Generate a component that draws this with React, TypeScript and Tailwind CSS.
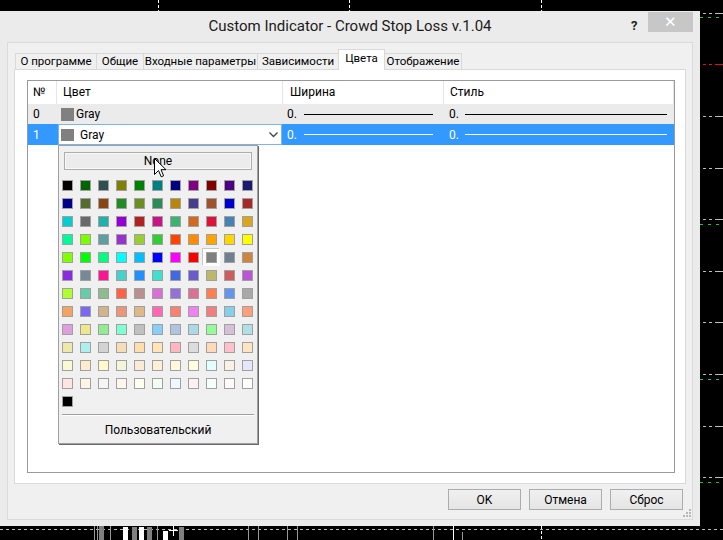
import React from "react";

// MetaTrader web-colour palette, 11 per row
const palette = [
  ["#000000", "#006400", "#2F4F4F", "#808000", "#008000", "#008080", "#000080", "#800080", "#800000", "#4B0082", "#191970"],
  ["#00008B", "#556B2F", "#8B4513", "#228B22", "#6B8E23", "#2E8B57", "#B8860B", "#483D8B", "#A0522D", "#0000CD", "#A52A2A"],
  ["#00CED1", "#696969", "#20B2AA", "#9400D3", "#B22222", "#C71585", "#3CB371", "#D2691E", "#DC143C", "#4682B4", "#DAA520"],
  ["#00FA9A", "#7CFC00", "#5F9EA0", "#9932CC", "#9ACD32", "#32CD32", "#FF4500", "#FF8C00", "#FFA500", "#FFD700", "#FFFF00"],
  ["#7FFF00", "#00FF00", "#00FF7F", "#00FFFF", "#00BFFF", "#0000FF", "#FF00FF", "#FF0000", "#808080", "#708090", "#CD853F"],
  ["#8A2BE2", "#778899", "#FF1493", "#48D1CC", "#1E90FF", "#40E0D0", "#4169E1", "#6A5ACD", "#BDB76B", "#CD5C5C", "#BA55D3"],
  ["#ADFF2F", "#66CDAA", "#8FBC8F", "#FF6347", "#BC8F8F", "#DA70D6", "#9370DB", "#DB7093", "#FF7F50", "#6495ED", "#A9A9A9"],
  ["#F4A460", "#7B68EE", "#D2B48C", "#E9967A", "#DEB887", "#FF69B4", "#FA8072", "#EE82EE", "#F08080", "#87CEEB", "#FFA07A"],
  ["#DDA0DD", "#F0E68C", "#90EE90", "#7FFFD4", "#C0C0C0", "#87CEFA", "#B0C4DE", "#ADD8E6", "#98FB98", "#D8BFD8", "#B0E0E6"],
  ["#EEE8AA", "#AFEEEE", "#D3D3D3", "#F5DEB3", "#FFDEAD", "#FFE4B5", "#FFB6C1", "#DCDCDC", "#FFDAB9", "#FFC0CB", "#FFE4C4"],
  ["#FAFAD2", "#FFEBCD", "#FFFACD", "#F5F5DC", "#FAEBD7", "#FFEFD5", "#FFF8DC", "#FFFFE0", "#E0FFFF", "#FAF0E6", "#E6E6FA"],
  ["#FFE4E1", "#FDF5E6", "#F5F5F5", "#FFF5EE", "#FFFFF0", "#F0FFF0", "#F0F8FF", "#FFF0F5", "#F5FFFA", "#FFFAFA", "#FFFFFF"],
  ["#000000"],
];

const tabs = [
  { label: "О программе", w: "w-[82px]" },
  { label: "Общие", w: "w-[48px]" },
  { label: "Входные параметры", w: "w-[115px]" },
  { label: "Зависимости", w: "w-[82px]" },
  { label: "Цвета", w: "w-[47px]", active: true },
  { label: "Отображение", w: "w-[78px]" },
];

function ChartBackdrop() {
  const grey = [13, 116, 168, 219, 271, 322, 374, 426, 477];
  const green = [17, 224, 379, 482];
  return (
    <svg className="absolute inset-0" width="723" height="540">
      {[158.5, 349.5, 541.5].map((x) => (
        <line key={x} x1={x} y1="0" x2={x} y2="11" stroke="#fff" strokeDasharray="3 2" />
      ))}
      {grey.map((y) => (
        <line key={y} x1="703" y1={y + 0.5} x2="723" y2={y + 0.5} stroke="#bdbdbd" strokeDasharray="3 3 3 3 12" />
      ))}
      {green.map((y) => (
        <line key={y} x1="700" y1={y + 0.5} x2="723" y2={y + 0.5} stroke="#22c322" strokeDasharray="3 5" />
      ))}
      <line x1="703" y1="64.5" x2="723" y2="64.5" stroke="#e01010" strokeDasharray="3 3 3 3 12" />
      <line x1="0" y1="529.5" x2="723" y2="529.5" stroke="#bdbdbd" strokeDasharray="3 3" />
      <line x1="94.5" y1="526" x2="94.5" y2="540" stroke="#9a9a9a" />
      <line x1="97.5" y1="526" x2="97.5" y2="540" stroke="#9a9a9a" />
      <rect x="99" y="526" width="5" height="14" fill="#808080" />
      <line x1="110.5" y1="526" x2="110.5" y2="540" stroke="#9a9a9a" />
      <rect x="123" y="527" width="5" height="13" fill="#fff" />
      <rect x="132" y="527" width="5" height="13" fill="#808080" />
      <rect x="139" y="527" width="5" height="13" fill="#fff" />
      <rect x="147" y="527" width="5" height="13" fill="#808080" />
      <line x1="157.5" y1="526" x2="157.5" y2="540" stroke="#9a9a9a" />
      <rect x="163" y="531" width="5" height="9" fill="#fff" />
      <line x1="173.5" y1="526" x2="173.5" y2="536" stroke="#fff" />
      <line x1="169" y1="530.5" x2="178" y2="530.5" stroke="#fff" />
      <rect x="179" y="527" width="5" height="13" fill="#808080" />
      <line x1="248.5" y1="526" x2="248.5" y2="540" stroke="#9a9a9a" />
      <line x1="258.5" y1="526" x2="258.5" y2="540" stroke="#9a9a9a" />
      <line x1="287.5" y1="526" x2="287.5" y2="540" stroke="#9a9a9a" />
      <line x1="297.5" y1="526" x2="297.5" y2="540" stroke="#9a9a9a" />
      <line x1="433.5" y1="526" x2="433.5" y2="540" stroke="#9a9a9a" />
      <line x1="453.5" y1="526" x2="453.5" y2="540" stroke="#fff" />
      <line x1="462.5" y1="532" x2="462.5" y2="540" stroke="#9a9a9a" />
      <line x1="541.5" y1="526" x2="541.5" y2="540" stroke="#fff" strokeDasharray="3 2" />
    </svg>
  );
}

function Cursor() {
  return (
    <svg className="absolute left-[95px] top-[12px]" width="13" height="20" viewBox="0 0 13 20">
      <path d="M0.5 0.5 L0.5 16.5 L4.5 12.5 L7.2 18.8 L9.6 17.8 L7 11.7 L12 11.7 Z" fill="#fff" stroke="#000" strokeLinejoin="miter" />
    </svg>
  );
}

function ColorDropdown() {
  return (
    <div className="absolute left-0 top-[21px] flex h-[299px] w-[200px] flex-col border border-[#a0a0a0] bg-[#f0f0f0] shadow-[1px_1px_0_#6a6a6a]">
      <div className="relative mx-[5px] mt-[6px] flex h-[18px] items-center justify-center border border-[#adadad] bg-[#ececec] text-[12px] text-black shadow-[inset_0_0_0_1px_#f8f8f8]">
        None
      </div>
      <div className="ml-[3px] mt-[10px] grid grid-cols-[repeat(11,11px)] gap-[7px]">
        {palette.flat().map((c, i) => (
          <div
            key={i}
            className={
              i === 52
                ? "h-[11px] w-[11px] border border-[#a0a0a0] shadow-[0_0_0_3px_#ffffff,-1px_-1px_0_3px_#c8c8c8]"
                : "h-[11px] w-[11px] border border-[#a0a0a0]"
            }
            style={{ backgroundColor: c }}
          />
        ))}
      </div>
      <div className="mx-[3px] mt-[7px] border-b border-t border-b-white border-t-[#a0a0a0]" />
      <div className="flex flex-1 items-center justify-center text-[12px] text-black">Пользовательский</div>
      <Cursor />
    </div>
  );
}

function StyleLine({ white }: { white?: boolean }) {
  return <div className={white ? "h-px flex-1 bg-white" : "h-px flex-1 bg-black"} />;
}

function ColorsList() {
  return (
    <div className="flex-1 border border-[#9a9a9a] bg-white text-[12px] text-black">
      <div className="grid h-[23px] grid-cols-[29px_226px_161px_1fr] items-center">
        <div className="h-full border-r border-[#e5e5e5] pl-[5px] leading-[23px]">№</div>
        <div className="h-full border-r border-[#e5e5e5] pl-[6px] leading-[23px]">Цвет</div>
        <div className="h-full border-r border-[#e5e5e5] pl-[7px] leading-[23px]">Ширина</div>
        <div className="h-full border-r border-[#e5e5e5] pl-[6px] leading-[23px]">Стиль</div>
      </div>
      <div className="grid h-[20px] grid-cols-[29px_226px_161px_1fr] items-center bg-[#ebebeb]">
        <div className="pl-[5px]">0</div>
        <div className="flex items-center pl-[4px]">
          <div className="h-[13px] w-[13px] bg-[#808080]" />
          <span className="ml-[2px]">Gray</span>
        </div>
        <div className="flex items-center pl-[4px] pr-[11px]">
          <span className="mr-[7px]">0.</span>
          <StyleLine />
        </div>
        <div className="flex items-center pl-[5px] pr-[7px]">
          <span className="mr-[6px]">0.</span>
          <StyleLine />
        </div>
      </div>
      <div className="relative z-10 grid h-[21px] grid-cols-[29px_226px_161px_1fr] items-center bg-[#3399ff] text-white">
        <div className="pl-[5px]">1</div>
        <div className="relative h-full pl-px">
          <div className="flex h-[21px] w-[224px] items-center border border-[#7eb4ea] bg-white pl-[2px] text-black">
            <div className="h-[12px] w-[13px] bg-[#808080]" />
            <span className="ml-[6px] flex-1">Gray</span>
            <svg width="9" height="6" viewBox="0 0 9 6" className="mr-[3px]">
              <path d="M0.5 0.5 L4.5 4.5 L8.5 0.5" fill="none" stroke="#444" strokeWidth="1.3" />
            </svg>
          </div>
          <div className="absolute left-px top-0">
            <ColorDropdown />
          </div>
        </div>
        <div className="flex items-center pl-[4px] pr-[11px]">
          <span className="mr-[7px]">0.</span>
          <StyleLine white />
        </div>
        <div className="flex items-center pl-[5px] pr-[7px]">
          <span className="mr-[6px]">0.</span>
          <StyleLine white />
        </div>
      </div>
    </div>
  );
}

export default function App() {
  return (
    <div className="relative h-[540px] w-[723px] overflow-hidden bg-black font-['Roboto',sans-serif]">
      <ChartBackdrop />
      <div className="absolute left-0 top-[11px] flex h-[515px] w-[700px] flex-col bg-[#ebebeb]">
        <div className="relative flex h-[31px] shrink-0 items-center justify-center">
          <span className="text-[15px] text-[#1a1a1a]">Custom Indicator - Crowd Stop Loss v.1.04</span>
          <span className="absolute left-[631px] top-[5px] text-[13px] font-bold text-[#222]">?</span>
          <div className="absolute left-[648px] top-px flex h-[20px] w-[45px] items-center justify-center bg-[#c7c7c7] text-[15px] leading-none text-white">
            ✕
          </div>
        </div>
        <div className="relative mx-[7px] mb-[6px] flex flex-1 flex-col border border-[#dadada] bg-[#f0f0f0] px-[6px] pt-[6px]">
          <div className="relative z-10 flex h-[20px] items-end pl-px text-[11.5px] text-black">
            {tabs.map((t, i) => (
              <div
                key={t.label}
                className={
                  (t.active
                    ? "z-10 -mb-px h-[21px] bg-white pb-[3px] "
                    : "h-[16px] bg-[#f0f0f0] ")
                  + (i > 0 ? "-ml-px " : "")
                  + t.w
                  + " flex items-center justify-center whitespace-nowrap border border-b-0 border-[#d9d9d9]"
                }
              >
                {t.label}
              </div>
            ))}
          </div>
          <div className="flex h-[415px] flex-col border border-[#d9d9d9] bg-white pb-[10px] pl-[12px] pr-[10px] pt-[10px]">
            <ColorsList />
          </div>
          <div className="mt-[5px] flex justify-end gap-[8px] pr-[3px]">
            {["OK", "Отмена", "Сброс"].map((b) => (
              <div
                key={b}
                className="flex h-[21px] w-[73px] items-center justify-center border border-[#acacac] bg-gradient-to-b from-[#f0f0f0] to-[#e5e5e5] text-[12px] text-black"
              >
                {b}
              </div>
            ))}
          </div>
          <svg className="absolute bottom-[2px] right-[1px]" width="8" height="8" viewBox="0 0 8 8">
            <rect x="6" y="0" width="2" height="2" fill="#b8b8b8" />
            <rect x="3" y="3" width="2" height="2" fill="#b8b8b8" />
            <rect x="6" y="3" width="2" height="2" fill="#b8b8b8" />
            <rect x="0" y="6" width="2" height="2" fill="#b8b8b8" />
            <rect x="3" y="6" width="2" height="2" fill="#b8b8b8" />
            <rect x="6" y="6" width="2" height="2" fill="#b8b8b8" />
          </svg>
        </div>
      </div>
    </div>
  );
}
